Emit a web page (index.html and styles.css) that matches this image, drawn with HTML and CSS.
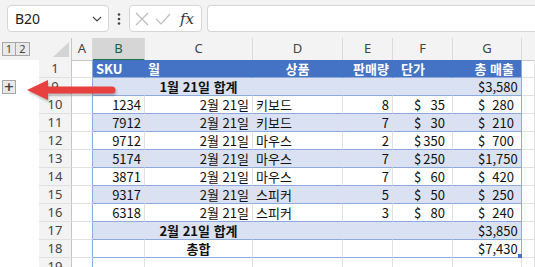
FILE: index.html
```html
<!DOCTYPE html>
<html lang="ko">
<head>
<meta charset="utf-8">
<link rel="stylesheet" href="styles.css">
</head>
<body>
<div class="toolbar">
  <div class="namebox"><span class="nb-text">B20</span>
    <svg class="chev" width="10" height="6" viewBox="0 0 10 6"><path d="M1 1 L5 5 L9 1" fill="none" stroke="#444" stroke-width="1.2"/></svg>
  </div>
  <svg class="dots" width="4" height="12" viewBox="0 0 4 12"><circle cx="2" cy="1.5" r="1.3" fill="#444"/><circle cx="2" cy="6" r="1.3" fill="#444"/><circle cx="2" cy="10.5" r="1.3" fill="#444"/></svg>
  <div class="fxbox">
    <svg width="14" height="14" viewBox="0 0 14 14"><path d="M1 1 L13 13 M13 1 L1 13" stroke="#bdbdbd" stroke-width="1.2" fill="none"/></svg>
    <svg width="16" height="14" viewBox="0 0 16 14"><path d="M1 7 L6 12 L15 2" stroke="#bdbdbd" stroke-width="1.2" fill="none"/></svg>
    <span class="fx">fx</span>
  </div>
  <div class="formula"></div>
</div>

<div class="sheet">
  <div class="row hdr">
    <div class="outline lvls"><span class="lvl">1</span><span class="lvl">2</span></div>
    <div class="corner"><svg width="16" height="15" viewBox="0 0 16 15"><path d="M16 0 L16 15 L0 15 Z" fill="#d4d4d4"/></svg></div>
    <div class="ch">A</div><div class="ch sel">B</div><div class="ch">C</div><div class="ch">D</div><div class="ch">E</div><div class="ch">F</div><div class="ch">G</div><div class="ch last"></div>
  </div>

  <div class="row">
    <div class="outline"></div><div class="rh">1</div><div class="c a"></div>
    <div class="c th left">SKU</div><div class="c th left">월</div><div class="c th center">상품</div><div class="c th right">판매량</div><div class="c th left pl8">단가</div><div class="c th right tr">총 매출</div><div class="c"></div>
  </div>

  <div class="row">
    <div class="outline"><span class="plus">+</span></div><div class="rh">9</div><div class="c a"></div>
    <div class="c sub"></div><div class="c sub center b">1월 21일 합계</div><div class="c sub"></div><div class="c sub"></div><div class="c sub"></div><div class="c sub money g tr"><span>$</span><span>3,580</span></div><div class="c"></div>
  </div>

  <div class="row">
    <div class="outline"></div><div class="rh">10</div><div class="c a"></div>
    <div class="c d right">1234</div><div class="c d right">2월 21일</div><div class="c d left">키보드</div><div class="c d right">8</div><div class="c d money f"><span>$</span><span>35</span></div><div class="c d money g tr"><span>$</span><span>280</span></div><div class="c"></div>
  </div>

  <div class="row band">
    <div class="outline"></div><div class="rh">11</div><div class="c a"></div>
    <div class="c d right">7912</div><div class="c d right">2월 21일</div><div class="c d left">키보드</div><div class="c d right">7</div><div class="c d money f"><span>$</span><span>30</span></div><div class="c d money g tr"><span>$</span><span>210</span></div><div class="c"></div>
  </div>

  <div class="row">
    <div class="outline"></div><div class="rh">12</div><div class="c a"></div>
    <div class="c d right">9712</div><div class="c d right">2월 21일</div><div class="c d left">마우스</div><div class="c d right">2</div><div class="c d money f"><span>$</span><span>350</span></div><div class="c d money g tr"><span>$</span><span>700</span></div><div class="c"></div>
  </div>

  <div class="row band">
    <div class="outline"></div><div class="rh">13</div><div class="c a"></div>
    <div class="c d right">5174</div><div class="c d right">2월 21일</div><div class="c d left">마우스</div><div class="c d right">7</div><div class="c d money f"><span>$</span><span>250</span></div><div class="c d money g tr"><span>$</span><span>1,750</span></div><div class="c"></div>
  </div>

  <div class="row">
    <div class="outline"></div><div class="rh">14</div><div class="c a"></div>
    <div class="c d right">3871</div><div class="c d right">2월 21일</div><div class="c d left">마우스</div><div class="c d right">7</div><div class="c d money f"><span>$</span><span>60</span></div><div class="c d money g tr"><span>$</span><span>420</span></div><div class="c"></div>
  </div>

  <div class="row band">
    <div class="outline"></div><div class="rh">15</div><div class="c a"></div>
    <div class="c d right">9317</div><div class="c d right">2월 21일</div><div class="c d left">스피커</div><div class="c d right">5</div><div class="c d money f"><span>$</span><span>50</span></div><div class="c d money g tr"><span>$</span><span>250</span></div><div class="c"></div>
  </div>

  <div class="row">
    <div class="outline"></div><div class="rh">16</div><div class="c a"></div>
    <div class="c d right">6318</div><div class="c d right">2월 21일</div><div class="c d left">스피커</div><div class="c d right">3</div><div class="c d money f"><span>$</span><span>80</span></div><div class="c d money g tr"><span>$</span><span>240</span></div><div class="c"></div>
  </div>

  <div class="row">
    <div class="outline"></div><div class="rh">17</div><div class="c a"></div>
    <div class="c sub"></div><div class="c sub center b">2월 21일 합계</div><div class="c sub"></div><div class="c sub"></div><div class="c sub"></div><div class="c sub money g tr"><span>$</span><span>3,850</span></div><div class="c"></div>
  </div>

  <div class="row">
    <div class="outline"></div><div class="rh">18</div><div class="c a"></div>
    <div class="c d"></div><div class="c d center b">총합</div><div class="c d"></div><div class="c d"></div><div class="c d"></div><div class="c d money g tr handle"><span>$</span><span>7,430</span></div><div class="c"></div>
  </div>

  <div class="row">
    <div class="outline"></div><div class="rh">19</div><div class="c a"></div>
    <div class="c"></div><div class="c"></div><div class="c"></div><div class="c"></div><div class="c"></div><div class="c"></div><div class="c"></div>
  </div>

  <svg class="arrow" width="100" height="30" viewBox="0 0 100 30">
    <path d="M22 10.5 L88 10.5 A3.5 3.5 0 0 1 88 17.5 L22 17.5 Z" fill="#e8403f"/>
    <path d="M3 14 L24 4 L24 24 Z" fill="#e8403f"/>
  </svg>
</div>
</body>
</html>
```

FILE: styles.css
```css
* { box-sizing: border-box; }
html, body { margin: 0; padding: 0; background: #ffffff; overflow: hidden; }
body { width: 535px; height: 267px; font-family: "Noto Sans CJK KR", "Noto Sans", sans-serif; }

.toolbar {
  height: 38px;
  background: #f3f3f3;
  display: flex;
  align-items: flex-start;
  padding: 5px 0 0 7px;
}
.namebox {
  width: 102px; height: 27px;
  background: #fff;
  border: 1px solid #d6d6d6;
  border-radius: 4px;
  display: flex; align-items: center; justify-content: space-between;
  padding: 0 6px 0 7px;
}
.nb-text { font-family: "Noto Sans", sans-serif; font-size: 14px; color: #222; }
.dots { margin: 8px 8px 0 8px; }
.fxbox {
  width: 73px; height: 27px;
  background: #fff;
  border: 1px solid #d6d6d6;
  border-radius: 4px;
  display: flex; align-items: center; gap: 6px;
  padding: 0 0 0 5px;
}
.fx { font-family: "DejaVu Serif", serif; font-style: italic; font-size: 15px; color: #333; margin-left: 3px; }
.formula {
  flex: 1; height: 27px; margin-left: 5px;
  background: #fff;
  border: 1px solid #d6d6d6;
  border-right: none;
  border-radius: 4px 0 0 4px;
}

.sheet { position: relative; }
.row {
  display: grid;
  grid-template-columns: 39px 33px 21px 52px 108px 90px 50px 60px 69px 1fr;
  height: 18px;
}
.row.hdr { height: 22px; }

.outline { background: #fff; position: relative; }
.lvls { background: #f3f3f3; display: flex; gap: 0; padding: 4px 0 0 2px; }
.lvl {
  width: 14px; height: 14px;
  border: 1px solid #a6a6a6;
  background: #e9e9e9;
  font-family: "Noto Sans", sans-serif; font-size: 11px; line-height: 12px;
  color: #444; text-align: center;
}
.lvl + .lvl { border-left: none; }
.plus {
  position: absolute; left: 2px; top: 2px;
  width: 14px; height: 14px;
  border: 1px solid #a6a6a6;
  background: #e9e9e9;
  font-family: "DejaVu Sans", sans-serif; font-weight: bold; font-size: 13px; line-height: 11px;
  color: #444; text-align: center;
}

.corner {
  background: #f3f3f3;
  border-right: 1px solid #c6c6c6;
  border-bottom: 1px solid #c6c6c6;
  display: flex; align-items: flex-end; justify-content: flex-end;
  padding: 0 2px 3px 0;
}
.ch {
  background: #f3f3f3;
  border-right: 1px solid #dadada;
  border-bottom: 1px solid #c6c6c6;
  font-family: "Noto Sans", sans-serif; font-size: 13px; color: #444;
  text-align: center; line-height: 21px;
}
.ch.sel { background: #d6d6d6; border-bottom: 2px solid #217346; color: #1f5c38; }
.ch.last { border-right: none; }

.rh {
  background: #f3f3f3;
  border-right: 1px solid #c6c6c6;
  border-bottom: 1px solid #e0e0e0;
  font-family: "Noto Sans", sans-serif; font-size: 13px; color: #444;
  text-align: center; line-height: 17px;
}

.c {
  border-right: 1px solid #e1e1e1;
  border-bottom: 1px solid #e1e1e1;
  font-size: 13px; line-height: 17px; color: #111;
  white-space: nowrap; overflow: visible;
  padding: 0 3px;
}
.c.a { border-right: 1px solid #8ea9db; }
.left { text-align: left; }
.right { text-align: right; }
.center { text-align: center; }
.pl8 { padding-left: 8px; }
.b { font-weight: bold; }

.th {
  background: #4472c4; color: #fff; font-weight: bold;
  border-right-color: #4472c4;
  border-bottom: 1px solid #8ea9db;
}
.th.tr { border-right-color: #8ea9db; padding-right: 7px; }

.sub {
  background: #d9e1f2;
  border-right-color: #d9e1f2;
  border-bottom: 1px solid #8ea9db;
}
.sub.tr { border-right-color: #8ea9db; }

.d { border-bottom: 1px solid #8ea9db; }
.band .d { background: #d9e1f2; }
.d.tr { border-right-color: #8ea9db; }

.money { display: flex; justify-content: space-between; padding-right: 7px; }
.money.f { padding-left: 21px; }
.money.g { padding-left: 25px; }

.handle { position: relative; }
.handle::after {
  content: ""; position: absolute; right: -1px; bottom: -1px;
  width: 4px; height: 4px; background: #4472c4;
}

.arrow {
  position: absolute; left: 24px; top: 38px;
  filter: drop-shadow(1px 2px 1px rgba(0,0,0,0.25));
}
```
